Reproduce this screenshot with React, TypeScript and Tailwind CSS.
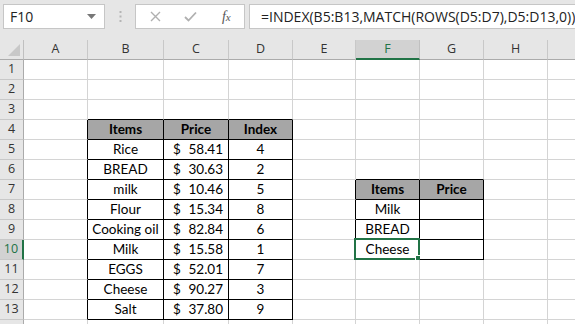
import React from "react";

const COLS = [
  { key: "A", w: "w-[64px]" },
  { key: "B", w: "w-[76px]" },
  { key: "C", w: "w-[65px]" },
  { key: "D", w: "w-[64px]" },
  { key: "E", w: "w-[63px]" },
  { key: "F", w: "w-[64px]" },
  { key: "G", w: "w-[64px]" },
  { key: "H", w: "w-[64px]" },
  { key: "I", w: "w-[40px]" },
];

type Cell = { t?: string; kind?: "head" | "price" | "center" };

const data: Record<string, Cell> = {
  "4-1": { t: "Items", kind: "head" },
  "4-2": { t: "Price", kind: "head" },
  "4-3": { t: "Index", kind: "head" },
  "7-5": { t: "Items", kind: "head" },
  "7-6": { t: "Price", kind: "head" },
  "8-5": { t: "Milk", kind: "center" },
  "9-5": { t: "BREAD", kind: "center" },
  "10-5": { t: "Cheese", kind: "center" },
};

const rowsData: [string, string, string][] = [
  ["Rice", "58.41", "4"],
  ["BREAD", "30.63", "2"],
  ["milk", "10.46", "5"],
  ["Flour", "15.34", "8"],
  ["Cooking oil", "82.84", "6"],
  ["Milk", "15.58", "1"],
  ["EGGS", "52.01", "7"],
  ["Cheese", "90.27", "3"],
  ["Salt", "37.80", "9"],
];
rowsData.forEach((r, i) => {
  const row = 5 + i;
  data[`${row}-1`] = { t: r[0], kind: "center" };
  data[`${row}-2`] = { t: r[1], kind: "price" };
  data[`${row}-3`] = { t: r[2], kind: "center" };
});

function inTable(r: number, c: number) {
  return (
    (r >= 4 && r <= 13 && c >= 1 && c <= 3) ||
    (r >= 7 && r <= 10 && c >= 5 && c <= 6)
  );
}

const cellFont = { fontFamily: "Lato, 'Liberation Sans', sans-serif" };
const uiFont = { fontFamily: "'Open Sans', 'Noto Sans', sans-serif" };

function GridCell({ r, c }: { r: number; c: number }) {
  const col = COLS[c];
  const rb = inTable(r, c) || inTable(r, c + 1);
  const bb = inTable(r, c) || inTable(r + 1, c);
  const cell = data[`${r}-${c}`];
  const isHead = cell?.kind === "head";
  const selected = r === 10 && c === 5;
  return (
    <div
      className={`relative h-[20px] shrink-0 box-border border-r border-b ${col.w} ${
        rb ? "border-r-black" : "border-r-[#d4d4d4]"
      } ${bb ? "border-b-black" : "border-b-[#d4d4d4]"} ${
        isHead ? "bg-[#a6a6a6]" : "bg-white"
      } flex items-center pt-[1px] text-[13.5px] leading-none text-black`}
      style={cellFont}
    >
      {cell?.kind === "head" && (
        <span className="w-full text-center font-bold">{cell.t}</span>
      )}
      {cell?.kind === "center" && (
        <span className="w-full text-center">{cell.t}</span>
      )}
      {cell?.kind === "price" && (
        <span className="w-full flex justify-between pl-[9px] pr-[5px]">
          <span>$</span>
          <span>{cell.t}</span>
        </span>
      )}
      {selected && (
        <>
          <div className="absolute left-[-2px] top-[-2px] w-[66px] h-[22px] border-2 border-[#217346] pointer-events-none" />
          <div className="absolute right-[-4px] bottom-[-4px] w-[6px] h-[6px] bg-[#217346] border border-white box-content pointer-events-none" />
        </>
      )}
    </div>
  );
}

export default function App() {
  const rows = Array.from({ length: 14 }, (_, i) => i + 1);
  return (
    <div className="w-[575px] h-[324px] overflow-hidden bg-[#e6e6e6] select-none">
      {/* Formula bar */}
      <div className="h-[40px] flex items-start pt-[4px] pl-[3px]">
        <div
          className="w-[102px] h-[25px] bg-white border border-[#c6c6c6] flex items-center justify-between pl-[6px] pr-[8px] text-[14px] text-[#222]"
          style={uiFont}
        >
          <span>F10</span>
          <svg width="9" height="5" viewBox="0 0 9 5">
            <path d="M0 0 H9 L4.5 5 Z" fill="#777" />
          </svg>
        </div>
        <div className="w-[30px] h-[25px] flex items-center justify-center">
          <svg width="3" height="11" viewBox="0 0 3 11">
            <rect x="0.5" y="0" width="2" height="2" fill="#b5b5b5" />
            <rect x="0.5" y="4.5" width="2" height="2" fill="#b5b5b5" />
            <rect x="0.5" y="9" width="2" height="2" fill="#b5b5b5" />
          </svg>
        </div>
        <div className="w-[110px] h-[25px] bg-white border border-[#c6c6c6] flex items-center">
          <div className="w-[36px] flex justify-center ml-[2px]">
            <svg width="11" height="11" viewBox="0 0 11 11">
              <path d="M1 1 L10 10 M10 1 L1 10" stroke="#b0b0b0" strokeWidth="1.4" />
            </svg>
          </div>
          <div className="w-[36px] flex justify-center">
            <svg width="13" height="11" viewBox="0 0 13 11">
              <path d="M1 6 L4.5 9.5 L12 1.5" stroke="#b0b0b0" strokeWidth="1.8" fill="none" />
            </svg>
          </div>
          <div
            className="w-[36px] flex justify-center text-[14px] italic text-[#555]"
            style={{ fontFamily: "'Liberation Serif', serif" }}
          >
            <span>
              f<span className="text-[11px]">x</span>
            </span>
          </div>
        </div>
        <div
          className="ml-[4px] flex-1 h-[25px] bg-white border border-[#c6c6c6] border-r-0 flex items-center pl-[11px] text-[14px] text-[#222] whitespace-nowrap overflow-hidden"
          style={uiFont}
        >
          =INDEX(B5:B13,MATCH(ROWS(D5:D7),D5:D13,0))
        </div>
      </div>

      {/* Column headers */}
      <div className="flex h-[20px]" style={uiFont}>
        <div className="w-[24px] h-[20px] shrink-0 relative border-r border-b border-r-[#c0c0c0] border-b-[#ababab] bg-[#e6e6e6]">
          <svg className="absolute right-[3px] bottom-[3px]" width="12" height="12" viewBox="0 0 12 12">
            <path d="M12 0 L12 12 L0 12 Z" fill="#c8c8c8" />
          </svg>
        </div>
        {COLS.map((c) =>
          c.key === "F" ? (
            <div
              key={c.key}
              className={`${c.w} h-[20px] shrink-0 box-border border-r border-r-[#c0c0c0] bg-[#d2d2d2] border-b-2 border-b-[#217346] flex items-center justify-center text-[12.5px] text-[#217346]`}
            >
              {c.key}
            </div>
          ) : (
            <div
              key={c.key}
              className={`${c.w} h-[20px] shrink-0 box-border border-r border-b border-r-[#c8c8c8] border-b-[#ababab] flex items-center justify-center text-[12.5px] text-[#333]`}
            >
              {c.key === "I" ? "" : c.key}
            </div>
          )
        )}
      </div>

      {/* Rows */}
      {rows.map((r) => (
        <div key={r} className="flex">
          {r === 10 ? (
            <div
              className="w-[24px] h-[20px] shrink-0 box-border border-r-2 border-b border-r-[#217346] border-b-[#c8c8c8] bg-[#d2d2d2] flex items-center justify-center text-[12.5px] text-[#217346]"
              style={uiFont}
            >
              {r}
            </div>
          ) : (
            <div
              className="w-[24px] h-[20px] shrink-0 box-border border-r border-b border-r-[#ababab] border-b-[#c8c8c8] bg-[#e6e6e6] flex items-center justify-center text-[12.5px] text-[#333]"
              style={uiFont}
            >
              {r === 14 ? "" : r}
            </div>
          )}
          {COLS.map((_, c) => (
            <GridCell key={c} r={r} c={c} />
          ))}
        </div>
      ))}
    </div>
  );
}
